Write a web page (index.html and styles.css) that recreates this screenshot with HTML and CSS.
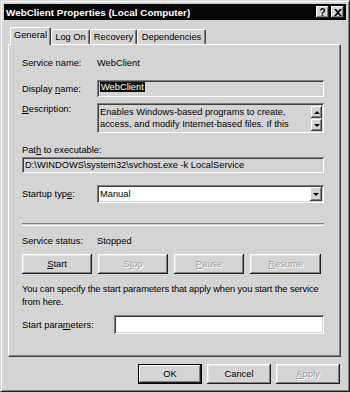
FILE: index.html
```html
<!DOCTYPE html>
<html lang="en">
<head>
  <meta charset="UTF-8">
  <title>WebClient Properties (Local Computer)</title>
  <link rel="stylesheet" href="styles.css">
</head>
<body>
  <div class="window">
    <div class="titlebar">
      <span class="title">WebClient Properties (Local Computer)</span>
      <div class="title-btns">
        <span class="tbtn help">?</span>
        <span class="tbtn close">
          <svg width="8" height="7" viewBox="0 0 8 7"><path d="M0 0h2l2 2 2-2h2L5 3.5 8 7H6L4 5 2 7H0l3-3.5z" fill="#000"/></svg>
        </span>
      </div>
    </div>
    <div class="content">
      <div class="tabs">
        <div class="tab active" style="width:41px">General</div>
        <div class="tab" style="width:39px">Log On</div>
        <div class="tab" style="width:47px">Recovery</div>
        <div class="tab" style="width:69px">Dependencies</div>
      </div>
      <div class="panel">
        <div class="row r-service">
          <span class="label">Service name:</span>
          <span>WebClient</span>
        </div>
        <div class="row r-display">
          <span class="label">Display <u>n</u>ame:</span>
          <div class="field readonly display"><span class="sel">WebClient</span></div>
        </div>
        <div class="row r-desc">
          <span class="label"><u>D</u>escription:</span>
          <div class="field readonly desc">
            <div class="desc-text">Enables Windows-based programs to create, access, and modify Internet-based files. If this</div>
            <div class="scroll">
              <span class="sbtn"><i class="tri up"></i></span>
              <span class="sbtn"><i class="tri down"></i></span>
            </div>
          </div>
        </div>
        <div class="path-label">Pat<u>h</u> to executable:</div>
        <div class="field readonly path">D:\WINDOWS\system32\svchost.exe -k LocalService</div>
        <div class="row r-startup">
          <span class="label">Startup typ<u>e</u>:</span>
          <div class="field select">
            <span>Manual</span>
            <span class="sbtn drop"><i class="tri down"></i></span>
          </div>
        </div>
        <div class="sep"></div>
        <div class="row r-status">
          <span class="label">Service status:</span>
          <span>Stopped</span>
        </div>
        <div class="svc-btns">
          <button class="btn"><u>S</u>tart</button>
          <button class="btn" disabled>S<u>t</u>op</button>
          <button class="btn" disabled><u>P</u>ause</button>
          <button class="btn" disabled><u>R</u>esume</button>
        </div>
        <p class="hint">You can specify the start parameters that apply when you start the service from here.</p>
        <div class="row r-params">
          <span class="label wide">Start para<u>m</u>eters:</span>
          <div class="field params"></div>
        </div>
      </div>
      <div class="footer">
        <button class="btn dlg default">OK</button>
        <button class="btn dlg">Cancel</button>
        <button class="btn dlg" disabled><u>A</u>pply</button>
      </div>
    </div>
  </div>
</body>
</html>
```

FILE: styles.css
```css
body { margin: 0; background: #d4d4d4; font-family: "Liberation Sans", Arial, sans-serif; font-size: 9.3px; color: #000; }
.window { box-sizing: border-box; width: 350px; height: 392px; background: #d4d4d4; border: 1px solid; border-color: #d4d4d4 #202020 #202020 #d4d4d4; box-shadow: inset 1px 1px #fff, inset -1px -1px #808080; padding: 3px; }
.titlebar { height: 16px; background: #060606; color: #fff; display: flex; justify-content: space-between; align-items: center; padding: 0 2px 0 2px; }
.title { font-weight: bold; font-size: 9.9px; }
.title-btns { display: flex; gap: 2px; }
.tbtn { box-sizing: border-box; width: 13px; height: 12px; background: #d4d4d4; color: #000; display: flex; align-items: center; justify-content: center; font-weight: bold; font-size: 10px; box-shadow: inset -1px -1px #202020, inset 1px 1px #fff, inset -2px -2px #808080; }
.content { padding: 7px 5px 0 4px; }
.tabs { display: flex; align-items: flex-end; height: 17px; padding-left: 4px; position: relative; z-index: 1; }
.tab { box-sizing: border-box; height: 15px; text-align: center; line-height: 14px; border-top: 1px solid #fff; border-left: 1px solid #fff; border-right: 1px solid #404040; box-shadow: inset -1px 0 #808080; border-radius: 2px 2px 0 0; background: #d4d4d4; }
.tab.active { height: 18px; margin: 0 -1px -1px -2px; line-height: 14px; padding-bottom: 2px; }
.tab.active + .tab { margin-left: 1px; }
.panel { box-sizing: border-box; height: 313px; border: 1px solid; border-color: #fff #404040 #404040 #fff; box-shadow: inset -1px -1px #808080; padding: 11px 16px 0 13px; }
.row { display: flex; align-items: center; }
.label { width: 75px; flex: none; }
.label.wide { width: 92px; }
.field { box-sizing: border-box; flex: 1; box-shadow: inset 1px 1px #808080, inset -1px -1px #fff, inset 2px 2px #404040, inset -2px -2px #d4d4d4; background: #fff; }
.field.readonly { background: #d4d4d4; }
.r-service { height: 13px; }
.r-display { margin-top: 11px; }
.display { height: 17px; padding: 2px 3px; line-height: 11px; }
.sel { background: #101010; color: #fff; padding: 0 1px; }
.r-desc { margin-top: 6px; align-items: flex-start; }
.r-desc .label { padding-top: 1px; }
.desc { height: 30px; display: flex; padding: 2px 2px 2px 3px; }
.desc-text { flex: 1; line-height: 12px; padding-top: 1px; }
.scroll { display: flex; flex-direction: column; gap: 1px; padding-top: 1px; }
.sbtn { box-sizing: border-box; width: 11px; height: 12px; background: #d4d4d4; display: flex; align-items: center; justify-content: center; box-shadow: inset -1px -1px #404040, inset 1px 1px #fff, inset -2px -2px #808080; }
.tri { width: 0; height: 0; border-left: 3px solid transparent; border-right: 3px solid transparent; }
.tri.up { border-bottom: 3px solid #000; }
.tri.down { border-top: 3px solid #000; }
.path-label { margin-top: 11px; height: 13px; line-height: 13px; }
.path { height: 16px; line-height: 16px; padding-left: 3px; }
.r-startup { margin-top: 12px; }
.select { height: 18px; display: flex; align-items: center; justify-content: space-between; padding: 2px 2px 2px 3px; }
.drop { height: 14px; width: 12px; }
.sep { margin-top: 20px; height: 1px; border-top: 1px solid #808080; border-bottom: 1px solid #fff; }
.r-status { margin-top: 8px; height: 13px; }
.svc-btns { display: flex; gap: 6px; margin-top: 7px; }
.btn { box-sizing: border-box; height: 20px; width: 70px; background: #d4d4d4; border: 0; padding: 0; font: inherit; color: #000; box-shadow: inset -1px -1px #202020, inset 1px 1px #fff, inset -2px -2px #808080, inset 2px 2px #e4e4e4; }
.svc-btns .btn:last-child { width: 71px; }
.btn:disabled { color: #9c9c9c; text-shadow: 1px 1px #fff; }
.hint { margin: 9px -12px 0 0; line-height: 13px; letter-spacing: -0.1px; }
.r-params { margin-top: 6px; }
.params { height: 19px; }
.footer { display: flex; justify-content: flex-end; gap: 5px; margin-top: 7px; padding-right: 1px; }
.btn.dlg { width: 64px; }
.btn.default { box-shadow: inset 0 0 0 1px #000, inset -2px -2px #202020, inset 2px 2px #fff, inset -3px -3px #808080; }
```
